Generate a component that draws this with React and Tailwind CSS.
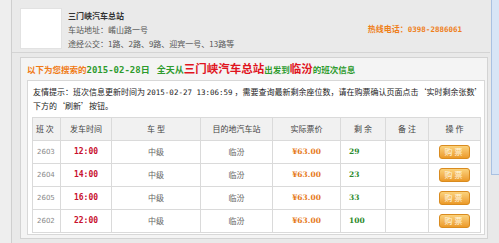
const rows = [
  { no: '2603', time: '12:00', type: '中级', dest: '临汾', price: '¥63.00', left: '29' },
  { no: '2604', time: '14:00', type: '中级', dest: '临汾', price: '¥63.00', left: '23' },
  { no: '2605', time: '16:00', type: '中级', dest: '临汾', price: '¥63.00', left: '33' },
  { no: '2602', time: '22:00', type: '中级', dest: '临汾', price: '¥63.00', left: '100' },
];

const cjk = "font-['Noto_Sans_CJK_SC',sans-serif]";

function BuyButton() {
  return (
    <span className="relative inline-flex items-center justify-center w-[31px] h-[14px] rounded-[3px] border border-[#d98b1f] bg-gradient-to-b from-[#fbd27a] to-[#eb9a26] text-[8px] leading-none text-[#fff6e0] tracking-[2px]">
      购票
    </span>
  );
}

export default function App() {
  return (
    <div className={`w-[499px] h-[243px] flex bg-[#e9e9e9] overflow-hidden ${cjk} text-[8px] text-[#333]`}>
      {/* left strip */}
      <div className="w-[12px] shrink-0 bg-[#eeeeee] border-r border-[#cfcfcf]" />

      {/* main column */}
      <div className="w-[478px] shrink-0 flex flex-col">
        {/* station header */}
        <div className="h-[53px] flex items-start pl-[8px] pr-[28px] pt-[8px] border-b border-[#d4d4d4] bg-[#eaeaea]">
          <div className="w-[42px] h-[41px] bg-white border border-[#e2e2e2]" />
          <div className="ml-[6px] pt-[1px] leading-[14px] text-[#555]">
            <div className="font-bold text-[#333]">三门峡汽车总站</div>
            <div>车站地址：崤山路一号</div>
            <div>途经公交：1路、2路、9路、迎宾一号、13路等</div>
          </div>
          <div className="ml-auto mt-[15px] font-bold text-[#ef7f1a]">
            热线电话：<span className="font-['DejaVu_Sans_Mono',monospace] text-[7.5px]">0398-2886061</span>
          </div>
        </div>

        {/* result panel */}
        <div className="mt-[4px] ml-[8px] mr-[2px] h-[182px] border border-[#d3d3d3] bg-[#f4f4f4] pl-[6px] pr-[2px]">
          <div className="h-[22px] pt-[5px] flex items-baseline whitespace-nowrap font-bold leading-none">
            <span className="text-[#f07a14] text-[8.5px]">以下为您搜索的</span>
            <span className="text-[#2e9b2e] text-[9px] font-['DejaVu_Sans_Mono',monospace]">2015-02-28</span>
            <span className="text-[#2e9b2e] text-[9px]">日</span>
            <span className="text-[#2e9b2e] text-[9px] ml-[7px]">全天从</span>
            <span className="text-[#e0141e] text-[11.5px]">三门峡汽车总站</span>
            <span className="text-[#2e9b2e] text-[8.5px]">出发到</span>
            <span className="text-[#e0141e] text-[11.5px]">临汾</span>
            <span className="text-[#2e9b2e] text-[8.5px]">的班次信息</span>
          </div>

          <div className="h-[155px] bg-white border border-[#d8d8d8] pl-[4px] pt-[4px]">
            <div className="pl-[1px] leading-[13px] text-[#222] whitespace-nowrap">
              <div>
                友情提示：班次信息更新时间为 <span className="font-['DejaVu_Sans_Mono',monospace] text-[7.5px]">2015-02-27 13:06:59</span> ，需要查询最新剩余座位数，请在购票确认页面点击‘实时剩余张数’
              </div>
              <div>下方的‘刷新’按钮。</div>
            </div>

            <table className="mt-[5px] w-[448px] table-fixed border-collapse border border-[#dadada]">
              <colgroup>
                <col className="w-[28px]" />
                <col className="w-[51px]" />
                <col className="w-[89px]" />
                <col className="w-[72px]" />
                <col className="w-[68px]" />
                <col className="w-[45px]" />
                <col className="w-[43px]" />
                <col className="w-[52px]" />
              </colgroup>
              <thead>
                <tr className="h-[23px] bg-[#f1f1f1] text-[#444]">
                  <th className="border border-[#dadada] font-normal text-left pl-[3px]">班 次</th>
                  <th className="border border-[#dadada] font-normal">发车时间</th>
                  <th className="border border-[#dadada] font-normal">车 型</th>
                  <th className="border border-[#dadada] font-normal">目的地汽车站</th>
                  <th className="border border-[#dadada] font-normal">实际票价</th>
                  <th className="border border-[#dadada] font-normal">剩 余</th>
                  <th className="border border-[#dadada] font-normal">备 注</th>
                  <th className="border border-[#dadada] font-normal">操 作</th>
                </tr>
              </thead>
              <tbody>
                {rows.map((r) => (
                  <tr key={r.no} className="h-[23px]">
                    <td className="border border-[#dadada] pl-[4px] text-[#888] font-['DejaVu_Sans',sans-serif] text-[7px]">{r.no}</td>
                    <td className="border border-[#dadada] text-center text-[#c8102e] font-bold font-['DejaVu_Sans_Mono',monospace] text-[8px]">{r.time}</td>
                    <td className="border border-[#dadada] text-center text-[#666]">{r.type}</td>
                    <td className="border border-[#dadada] text-center text-[#666]">{r.dest}</td>
                    <td className="border border-[#dadada] text-center text-[#e67a1c] font-bold font-['DejaVu_Serif',serif] text-[7.5px]">{r.price}</td>
                    <td className="border border-[#dadada] pl-[8px] text-[#2c8a2c] font-bold font-['DejaVu_Serif',serif] text-[7.5px]">{r.left}</td>
                    <td className="border border-[#dadada]" />
                    <td className="border border-[#dadada] text-center">
                      <BuyButton />
                    </td>
                  </tr>
                ))}
              </tbody>
            </table>
          </div>
        </div>
      </div>

      {/* right side panel */}
      <div className="ml-[1px] w-[8px] shrink-0 h-[175px] bg-[#d8e5f6] border-l border-b border-[#a9c1e2]" />
    </div>
  );
}
